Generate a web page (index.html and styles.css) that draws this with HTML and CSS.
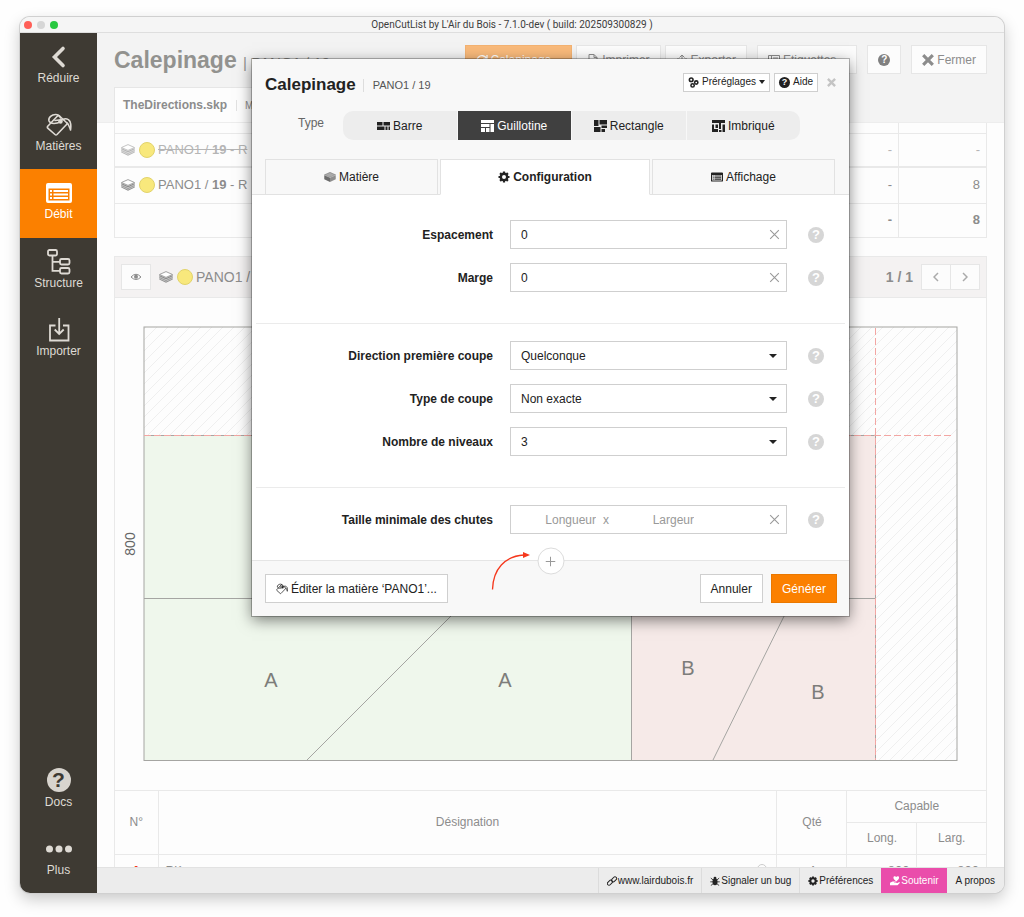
FILE: index.html
```html
<!DOCTYPE html>
<html lang="fr">
<head>
<meta charset="utf-8">
<meta name="viewport" content="width=device-width, initial-scale=1">
<title>OpenCutList by L'Air du Bois</title>
<link rel="stylesheet" href="styles.css">
</head>
<body>
<svg class="sprite" aria-hidden="true">
  <symbol id="i-back" viewBox="0 0 26 26"><path d="M17 4.500 8.500 13 17 21.500" fill="none" stroke="currentColor" stroke-width="3.600" stroke-linecap="round"/></symbol>
  <symbol id="i-bucket" viewBox="0 0 26 26"><g fill="none" stroke="currentColor" stroke-width="1.600" stroke-linejoin="round" stroke-linecap="round"><path d="M11 4.500 1.500 14.500Q1 15.500 2 16.300L9 22.500Q10 23.500 11 22.500L21.500 11.500 13.500 4Q12.500 3.200 11 4.500Z"/><path d="M14.500 9.500C11 12 4.500 12.500 3 9 2 5.500 6 2.500 9.500 2.500c3 0 4.500 2 5 3.500"/><path d="M9 8.500c3-1 6 0 8-1 2.500-1.500 5.500-.5 7 2 1 2.500 1 5.500.5 8.500-1-3-1.500-5.500-3.500-7"/></g><circle cx="14.500" cy="9.500" r="2.200" fill="currentColor"/></symbol>
  <symbol id="i-list" viewBox="0 0 26 26"><path fill="currentColor" fill-rule="evenodd" d="M2 3h22q2 0 2 2v16q0 2-2 2H2q-2 0-2-2V5Q0 3 2 3ZM2.500 8.500v12h21v-12Z"/><path fill="currentColor" d="M4 10h2v2H4zm3.500 0H22v2H7.500zM4 13.500h2v2H4zm3.500 0H22v2H7.500zM4 17h2v2H4zm3.500 0H22v2H7.500z"/></symbol>
  <symbol id="i-tree" viewBox="0 0 26 26"><g fill="none" stroke="currentColor" stroke-width="1.800"><rect x="2" y="1" width="9" height="5.500" rx="1.500"/><rect x="14" y="10" width="9.500" height="5.500" rx="1.500"/><rect x="14" y="19" width="9.500" height="5.500" rx="1.500"/><path d="M6.500 6.500v15.300H14M6.500 12.800H14"/></g></symbol>
  <symbol id="i-import" viewBox="0 0 26 26"><path fill="none" stroke="currentColor" stroke-width="1.800" d="M9.500 8.500H4V23.500H22.500V8.500H17M13.200 1v16M8.700 12.500l4.500 4.500 4.500-4.500"/></symbol>
  <symbol id="i-dots" viewBox="0 0 26 26"><g fill="currentColor"><circle cx="3.500" cy="13" r="3.500"/><circle cx="13" cy="13" r="3.500"/><circle cx="22.500" cy="13" r="3.500"/></g></symbol>
  <symbol id="i-layers" viewBox="0 0 14 12"><path fill="#fff" stroke="currentColor" stroke-width=".8" d="M7 .6 13.500 3.500 7 6.400.5 3.500Z"/><path fill="currentColor" d="M.3 4 7 7v4.700L.3 8.600ZM13.700 4 7 7v4.700l6.700-3.100Z"/><path stroke="#fff" stroke-width=".6" fill="none" opacity=".8" d="M.3 5.700 7 8.700l6.700-3M.3 7.300 7 10.300l6.700-3"/></symbol>
  <symbol id="i-solid" viewBox="0 0 14 12"><path fill="#aaa" stroke="#777" stroke-width=".6" d="M7 .6 13.500 3.500 7 6.400.5 3.500Z"/><path fill="#6c6c6c" d="M.3 4 7 7v4.700L.3 8.600Z"/><path fill="#8e8e8e" d="M13.700 4 7 7v4.700l6.700-3.100Z"/></symbol>
  <symbol id="i-eye" viewBox="0 0 12 10"><path fill="none" stroke="currentColor" d="M1 5Q6-.5 11 5 6 10 1 5Z"/><circle cx="6" cy="4.800" r="2" fill="currentColor"/></symbol>
  <symbol id="i-x" viewBox="0 0 12 12"><path fill="none" stroke="currentColor" stroke-width="3.200" d="M1.200 1.200 10.800 10.800M10.800 1.200 1.200 10.800"/></symbol>
  <symbol id="i-thin-x" viewBox="0 0 12 12"><path fill="none" stroke="currentColor" d="M2 2 10 10M10 2 2 10"/></symbol>
  <symbol id="i-gear" viewBox="0 0 12 12"><circle cx="6" cy="6" r="3.200" fill="none" stroke="currentColor" stroke-width="2.400"/><path stroke="currentColor" stroke-width="2.200" d="M6 .5v1.800M6 9.700v1.800M.5 6h1.800M9.700 6h1.800M2.100 2.100l1.300 1.300M8.600 8.600l1.300 1.300M9.900 2.100 8.600 3.400M3.400 8.600 2.100 9.900"/></symbol>
  <symbol id="i-presets" viewBox="0 0 12 12"><g fill="none" stroke="currentColor" stroke-width="1.700"><circle cx="3.500" cy="3" r="2"/><circle cx="9" cy="6" r="1.800"/><circle cx="5" cy="9.200" r="1.800"/></g></symbol>
  <symbol id="i-bar" viewBox="0 0 13 12"><path fill="currentColor" d="M0 2h5.500v3.500H0zM6.500 2H13v3.500H6.500zM0 6.500h7.500V10H0zM8.500 6.500h2V10h-2zM11.500 6.500H13V10h-1.500z"/></symbol>
  <symbol id="i-guil" viewBox="0 0 13 12"><path fill="currentColor" d="M0 0h13v3H0zM0 4h8.500v3H0zM9.500 4H13v8H9.500zM0 8h4v4H0zM5 8h3.500v4H5z"/></symbol>
  <symbol id="i-rect" viewBox="0 0 13 12"><path fill="currentColor" d="M0 0h4.500v6H0zM5.500 0H13v4.500H5.500zM0 7h6.500v5H0zM7.500 5.500H13V8H7.500zM7.500 9H11v3H7.500z"/></symbol>
  <symbol id="i-nest" viewBox="0 0 13 12"><path fill="currentColor" d="M0 0h13v3H9v6H7V3H0zM0 4.500h2V9h4v3H0zM3.500 4.500H6V8H3.500zM7 10h2.500v2H7zM10.500 4.500H13V12h-2.500z"/></symbol>
  <symbol id="i-refresh" viewBox="0 0 12 12"><path fill="none" stroke="currentColor" stroke-width="1.300" d="M10.500 4.500A5 5 0 1 0 11 7M11 1v3.800H7.200"/></symbol>
  <symbol id="i-file" viewBox="0 0 12 12"><path fill="none" stroke="currentColor" d="M2 .5h5l3 3v8H2ZM7 .5v3h3"/></symbol>
  <symbol id="i-export" viewBox="0 0 12 12"><path fill="none" stroke="currentColor" d="M3.500 5H1v6.500h10V5H8.500M6 8V1M3.500 3.500 6 1l2.500 2.500"/></symbol>
  <symbol id="i-label" viewBox="0 0 12 12"><path fill="none" stroke="currentColor" d="M.5 1.500h11v9H.5ZM3.500 1.500v9M5 4h5M5 7h5"/></symbol>
  <symbol id="i-link" viewBox="0 0 12 12"><g fill="none" stroke="currentColor" stroke-width="1.200"><rect x="5" y="2" width="7" height="4" rx="2" transform="rotate(-45 8.500 4)"/><rect x="0" y="6" width="7" height="4" rx="2" transform="rotate(-45 3.500 8)"/></g></symbol>
  <symbol id="i-bug" viewBox="0 0 12 12"><ellipse cx="6" cy="7" rx="3" ry="4.200" fill="currentColor"/><circle cx="6" cy="2.500" r="1.700" fill="currentColor"/><path stroke="currentColor" fill="none" d="M1 2.500 4 5M11 2.500 8 5M.3 7h11.400M1 11.500 4 9M11 11.500 8 9"/></symbol>
  <symbol id="i-heart" viewBox="0 0 12 12"><path fill="currentColor" d="M7.500 6.500 4.500 3.500C3-.2 6.500-.5 7.500 1.300 8.500-.5 12-.2 10.500 3.500ZM0 8l3-1.500h3.500L8 7.800H5v.6h4L11 7.300l1 .7-3 3H0Z"/></symbol>
  <pattern id="hatch" width="11" height="11" patternUnits="userSpaceOnUse"><path d="M-1 12 12-1" stroke="#efefef" stroke-width="1"/></pattern>
</svg>

<div class="window">
  <header class="titlebar">
    <span class="lights"><i class="light red"></i><i class="light gray"></i><i class="light green"></i></span>
    <span>OpenCutList by L'Air du Bois - 7.1.0-dev ( build: 202509300829 )</span>
  </header>
  <div class="app">
    <nav class="sidebar">
      <button class="nav-item"><svg class="nav-icon"><use href="#i-back"/></svg>Réduire</button>
      <button class="nav-item"><svg class="nav-icon"><use href="#i-bucket"/></svg>Matières</button>
      <button class="nav-item active"><svg class="nav-icon"><use href="#i-list"/></svg>Débit</button>
      <button class="nav-item"><svg class="nav-icon"><use href="#i-tree"/></svg>Structure</button>
      <button class="nav-item"><svg class="nav-icon"><use href="#i-import"/></svg>Importer</button>
      <span class="spacer"></span>
      <button class="nav-item"><span class="nav-icon nav-q">?</span>Docs</button>
      <button class="nav-item"><svg class="nav-icon"><use href="#i-dots"/></svg>Plus</button>
    </nav>

    <main class="main">
      <div class="topbar">
        <div class="toprow">
          <h1 class="page-title">Calepinage <small>| PANO1 / 19</small></h1>
          <div class="actions">
            <button class="btn primary-soft"><svg class="icon"><use href="#i-refresh"/></svg>Calepinage...</button>
            <button class="btn"><svg class="icon"><use href="#i-file"/></svg>Imprimer</button>
            <button class="btn"><svg class="icon"><use href="#i-export"/></svg>Exporter</button>
            <button class="btn apart"><svg class="icon"><use href="#i-label"/></svg>Etiquettes...</button>
            <button class="btn apart help-btn" aria-label="Aide"><span class="q">?</span></button>
            <button class="btn apart"><svg class="icon"><use href="#i-x"/></svg>Fermer</button>
          </div>
        </div>
        <div class="file-tab"><strong>TheDirections.skp</strong><span class="file-sub">Modèle</span></div>
      </div>

      <div class="content">
        <table class="summary">
          <tr class="cut"><td></td><td></td><td></td></tr>
          <tr class="struck"><td><span class="mat"><svg class="layers"><use href="#i-layers"/></svg><i class="dot"></i><span>PANO1 / <b>19</b> - R</span></span></td><td>-</td><td>-</td></tr>
          <tr class="thick"><td><span class="mat"><svg class="layers"><use href="#i-layers"/></svg><i class="dot"></i><span>PANO1 / <b>19</b> - R</span></span></td><td>-</td><td>8</td></tr>
          <tr class="total"><td></td><td>-</td><td>8</td></tr>
        </table>

        <section class="panel">
          <div class="panel-head">
            <button class="eye" aria-label="Afficher"><svg><use href="#i-eye"/></svg></button>
            <span class="mat"><svg class="layers"><use href="#i-layers"/></svg><i class="dot"></i><span>PANO1 / <b>19</b></span></span>
            <strong class="pages">1 / 1</strong>
            <span class="pager"><button aria-label="Précédent"><svg viewBox="0 0 6 10"><path d="M5 1 1 5l4 4"/></svg></button><button aria-label="Suivant"><svg viewBox="0 0 6 10"><path d="M1 1l4 4-4 4"/></svg></button></span>
          </div>
          <svg class="sheet" viewBox="115 298 871 492" role="img" aria-label="Plan de débit">
            <rect x="144" y="327" width="813" height="433" fill="#fdfdfd"/>
            <rect x="144" y="327" width="813" height="433" fill="url(#hatch)"/>
            <rect x="144" y="435" width="487" height="325" fill="#eff7ec"/>
            <rect x="631" y="435" width="244" height="325" fill="#f6eae8"/>
            <g stroke="#a5a5a2" fill="none"><path d="M144 435.500H875M144 598.500H875M631.500 435V760M875.500 435V760M307 760 469 598M713 760 793 598"/><rect x="144" y="327" width="813" height="433.500"/></g>
            <path d="M875.500 328V760M144 435.500H954" stroke="#f3a6a3" stroke-dasharray="7 3" fill="none"/>
            <g class="part"><text x="271" y="687">A</text><text x="505" y="687">A</text><text x="688" y="675">B</text><text x="818" y="699">B</text></g>
            <text class="dim" transform="translate(135 544) rotate(-90)">800</text>
          </svg>
          <table class="parts">
            <colgroup><col class="c-num"><col><col class="c-n"><col class="c-n"><col class="c-last"></colgroup>
            <tr><th rowspan="2">N°</th><th rowspan="2">Désignation</th><th rowspan="2">Qté</th><th colspan="2">Capable</th></tr>
            <tr><th>Long.</th><th>Larg.</th></tr>
            <tr class="part-row"><td class="num">A</td><td class="name">Pièce<i class="ring"></i></td><td>4</td><td class="r">800</td><td class="r">800</td></tr>
          </table>
        </section>
      </div>

      <footer class="statusbar">
        <a href="#"><svg class="icon"><use href="#i-link"/></svg>www.lairdubois.fr</a>
        <a href="#"><svg class="icon"><use href="#i-bug"/></svg>Signaler un bug</a>
        <a href="#"><svg class="icon"><use href="#i-gear"/></svg>Préférences</a>
        <a href="#" class="pink"><svg class="icon"><use href="#i-heart"/></svg>Soutenir</a>
        <a href="#" class="plain">A propos</a>
      </footer>

      <div class="overlay">
        <form class="modal" role="dialog" aria-labelledby="dlg">
          <div class="modal-top">
            <div class="modal-head">
              <h2 id="dlg">Calepinage</h2><span class="sub">PANO1 / 19</span>
              <span class="spacer"></span>
              <button type="button" class="btn small"><svg class="icon"><use href="#i-presets"/></svg>Préréglages<i class="caret"></i></button>
              <button type="button" class="btn small"><span class="q">?</span>Aide</button>
              <button type="button" class="close" aria-label="Fermer"><svg><use href="#i-x"/></svg></button>
            </div>
            <div class="types">
              <span class="type-label">Type</span>
              <div class="segments">
                <button type="button"><svg class="icon"><use href="#i-bar"/></svg>Barre</button>
                <button type="button" class="on"><svg class="icon"><use href="#i-guil"/></svg>Guillotine</button>
                <button type="button"><svg class="icon"><use href="#i-rect"/></svg>Rectangle</button>
                <button type="button"><svg class="icon"><use href="#i-nest"/></svg>Imbriqué</button>
              </div>
            </div>
            <div class="tabs">
              <button type="button" class="tab"><svg class="icon"><use href="#i-solid"/></svg>Matière</button>
              <button type="button" class="tab current"><svg class="icon"><use href="#i-gear"/></svg>Configuration</button>
              <button type="button" class="tab"><svg class="icon"><use href="#i-list"/></svg>Affichage</button>
            </div>
          </div>
          <div class="modal-body">
            <div class="group">
              <div class="row"><label for="f1">Espacement</label><div class="field"><input id="f1" type="text" value="0"><button type="button" class="clear" aria-label="Effacer"><svg><use href="#i-thin-x"/></svg></button></div><span class="q">?</span></div>
              <div class="row"><label for="f2">Marge</label><div class="field"><input id="f2" type="text" value="0"><button type="button" class="clear" aria-label="Effacer"><svg><use href="#i-thin-x"/></svg></button></div><span class="q">?</span></div>
            </div>
            <div class="group">
              <div class="row"><label for="f3">Direction première coupe</label><div class="field select"><select id="f3"><option>Quelconque</option></select></div><span class="q">?</span></div>
              <div class="row"><label for="f4">Type de coupe</label><div class="field select"><select id="f4"><option>Non exacte</option></select></div><span class="q">?</span></div>
              <div class="row"><label for="f5">Nombre de niveaux</label><div class="field select"><select id="f5"><option>3</option></select></div><span class="q">?</span></div>
            </div>
            <div class="group last">
              <div class="row"><label for="f6">Taille minimale des chutes</label><div class="field size"><input id="f6" type="text" placeholder="Longueur"><span>x</span><input type="text" placeholder="Largeur" aria-label="Largeur"><button type="button" class="clear" aria-label="Effacer"><svg><use href="#i-thin-x"/></svg></button></div><span class="q">?</span></div>
            </div>
          </div>
          <div class="modal-foot">
            <button type="button" class="btn"><svg class="icon"><use href="#i-bucket"/></svg>Éditer la matière ‘PANO1’...</button>
            <span class="spacer"></span>
            <button type="button" class="btn">Annuler</button>
            <button type="submit" class="btn primary">Générer</button>
            <button type="button" class="plus" aria-label="Plus d'options"><svg viewBox="0 0 10 10"><path d="M5 0v10M0 5h10"/></svg></button>
            <svg class="arrow" viewBox="0 0 40 40" aria-hidden="true"><path d="M1.500 38.500C2 18 14 5 33 4" fill="none" stroke="#f5381d" stroke-width="1.300"/><path d="M32 1l7 3-7 3Z" fill="#f5381d"/></svg>
          </div>
        </form>
      </div>
    </main>
  </div>
</div>
</body>
</html>
```
FILE: styles.css
```css
*, *::before, *::after { box-sizing: border-box; }
body { margin: 0; height: 100vh; padding: 17px 20px 24px; background: #fefefe; font: 12px/16px "Liberation Sans", Arial, sans-serif; color: #222; overflow: hidden; }
button, input, select { font: inherit; color: inherit; margin: 0; border-radius: 0; }
button { cursor: pointer; white-space: nowrap; }
.sprite { position: absolute; width: 0; height: 0; }
.spacer { flex: 1; }

.window { height: 100%; display: flex; flex-direction: column; border-radius: 10px; overflow: hidden; box-shadow: 0 0 0 1px #d0d0d0, 0 6px 16px rgba(0,0,0,.22); background: #fdfdfd; }
.titlebar { position: relative; display: flex; justify-content: center; height: 16px; border-bottom: 1px solid #dedede; background: #f5f5f5; font: 10px/15px Roboto, "Liberation Sans", sans-serif; color: #3c3c3c; flex: none; }
.lights { position: absolute; left: 4px; top: 4px; display: flex; gap: 5px; }
.light { width: 8px; height: 8px; border-radius: 50%; }
.red { background: #ff5f57; }
.gray { background: #d6d6d6; }
.green { background: #28c840; }
.app { flex: 1; display: flex; min-height: 0; }

.sidebar { width: 77px; flex: none; display: flex; flex-direction: column; background: #3e3a33; }
.nav-item { display: flex; flex-direction: column; align-items: center; height: 68px; padding: 11px 0 0; border: 0; background: none; color: #dedad4; line-height: 16px; }
.nav-item.active { height: 69px; background: #fb8000; color: #fff; }
.nav-icon { width: 26px; height: 26px; }
.nav-q { width: 24px; height: 24px; margin-bottom: 2px; border-radius: 50%; background: #d8d4ce; color: #3e3a33; font-weight: bold; font-size: 21px; line-height: 24px; text-align: center; }

.main { position: relative; flex: 1; min-width: 0; display: flex; flex-direction: column; color: #8c8c8c; }
.topbar { flex: none; display: flex; flex-direction: column; padding: 12px 17px 0; height: 90px; background: #f3f3f3; border-bottom: 1px solid #ededed; }
.toprow { display: flex; justify-content: space-between; height: 43px; }
.page-title { margin: 0; font-size: 23px; line-height: 30px; color: #92928f; white-space: nowrap; }
.page-title small { font-size: 15px; font-weight: normal; }
.actions { display: flex; gap: 4px; }
.btn { display: inline-flex; align-items: center; gap: 3px; height: 29px; padding: 0 10px; border: 1px solid #cfcfcf; background: #fff; }
.topbar .btn { border-color: #e6e6e6; background: #fcfcfc; }
.topbar .btn.apart { margin-left: 6px; }
.topbar .btn.primary-soft { background: #f9ba7b; border-color: #f3b272; color: #fff; }
.icon { width: 12px; height: 12px; flex: none; }
.q { display: inline-block; flex: none; width: 16px; height: 16px; border-radius: 50%; background: #d6d6d6; color: #fff; font-weight: bold; font-size: 13px; line-height: 16px; text-align: center; }
.btn .q { width: 12px; height: 12px; font-size: 10px; line-height: 12px; background: #808080; }
.file-tab { align-self: flex-start; width: 400px; height: 35px; flex: none; padding: 9px 8px; background: #fdfdfd; border: 1px solid #e6e6e6; border-bottom: 0; }
.file-sub { margin-left: 9px; padding-left: 8px; border-left: 1px solid #e2e2e2; font-size: 10px; }

.content { flex: 1; min-height: 0; overflow: hidden; padding: 0 17px; }
table { border-collapse: collapse; width: 100%; table-layout: fixed; font-size: 13px; }
td, th { border: 1px solid #e9e9e9; font-weight: normal; }
.summary td { height: 34px; padding: 0 6px; text-align: right; }
.summary td:nth-child(n+2) { width: 88px; }
.summary .cut td { height: 10px; border-top: 0; }
.summary .thick td { height: 36px; border-top-width: 2px; }
.struck { color: #b5b5b5; }
.struck .mat { text-decoration: line-through; }
.summary .total td { font-weight: bold; }
.mat { display: flex; align-items: center; gap: 3px; text-align: left; }
.layers { width: 14px; height: 12px; margin-right: 1px; }
.dot { width: 16px; height: 16px; border-radius: 50%; background: #f8e87c; border: 1px solid #e2d36b; }

.panel { margin-top: 18px; border: 1px solid #e9e9e9; }
.panel-head { display: flex; align-items: center; height: 41px; padding: 0 6px; background: #f4f2f2; border-bottom: 1px solid #e9e9e9; font-size: 14px; }
.eye, .pager button { display: flex; align-items: center; justify-content: center; width: 30px; height: 26px; padding: 0; border: 1px solid #e6e6e6; background: #fcfcfc; }
.eye svg { width: 12px; height: 10px; }
.panel-head .mat { margin-left: 8px; }
.pages { margin-left: auto; margin-right: 8px; }
.pager { display: flex; }
.pager button + button { margin-left: -1px; }
.pager svg { width: 6px; height: 10px; fill: none; stroke: #aaa; stroke-width: 1.5; }
.sheet { display: block; width: 100%; height: auto; }
.part { font-size: 20px; fill: #7d7d7a; text-anchor: middle; }
.dim { font-size: 14px; fill: #666; text-anchor: middle; }
.parts { font-size: 12px; text-align: center; }
.parts th { height: 32px; padding: 0; }
.parts tr > :first-child { border-left: 0; }
.parts tr > :last-child { border-right: 0; }
.parts tr:nth-child(2) > :first-child { border-left: 1px solid #e9e9e9; }
.c-num { width: 43px; }
.c-n { width: 70px; }
.c-last { width: 69px; }
.parts td { height: 34px; padding: 0 7px; font-size: 13px; }
.parts .num { color: #f5381d; font-weight: bold; }
.parts .name { text-align: left; }
.parts .r { text-align: right; }
.ring { float: right; width: 10px; height: 10px; margin: 1px 2px; border: 1px solid #ccc; border-radius: 50%; }

.statusbar { flex: none; display: flex; justify-content: flex-end; height: 26px; border-top: 1px solid #e2e2e2; background: #ececec; font-size: 10px; }
.statusbar a { display: flex; align-items: center; padding: 0 8px; border-left: 1px solid #dcdcdc; color: #222; text-decoration: none; white-space: nowrap; }
.statusbar .icon { width: 10px; height: 10px; margin-right: 1px; }
.statusbar .pink { background: #ea4dab; border-color: #ea4dab; color: #fff; }
.statusbar .plain { padding: 0 9px; border: 0; }

.overlay { position: absolute; inset: 0; display: flex; align-items: flex-start; justify-content: center; padding-top: 26px; }
.modal { width: 597px; max-width: 100%; background: #fff; color: #222; box-shadow: 0 0 0 1px rgba(0,0,0,.25), 0 4px 14px rgba(0,0,0,.5); }
.modal-top { background: #f8f8f8; }
.modal-head { display: flex; align-items: center; height: 52px; padding: 0 13px; gap: 4px; }
.modal-head h2 { margin: 0; font-size: 17px; line-height: 24px; }
.sub { margin-left: 3px; padding-left: 9px; border-left: 1px solid #ddd; color: #555; font-size: 11px; line-height: 13px; }
.modal-head .btn { margin-bottom: 6px; }
.btn.small { height: 19px; padding: 0 4px; font-size: 10px; }
.btn.small .icon { width: 11px; height: 11px; }
.btn.small .q { width: 11px; height: 11px; font-size: 9px; line-height: 11px; background: #222; }
.caret { border: 3px solid transparent; border-top: 4px solid currentColor; border-bottom: 0; }
.close { display: flex; margin: 0 0 6px 5px; padding: 0; border: 0; background: none; color: #c4c4c4; }
.close svg { width: 9px; height: 9px; }
.types { display: flex; padding: 0 49px 19px 46px; }
.type-label { width: 45px; line-height: 25px; color: #666; }
.segments { flex: 1; display: grid; grid-template-columns: repeat(4, 1fr); gap: 1px; border-radius: 10px; overflow: hidden; }
.segments button { display: flex; align-items: center; justify-content: center; gap: 3px; height: 29px; padding: 0; border: 0; background: #ededed; }
.segments .icon { width: 13px; }
.segments .on { background: #404040; color: #fff; }
.tabs { display: grid; grid-template-columns: 173px 210px 183px; gap: 2px; padding: 0 13px; box-shadow: inset 0 -1px #e2e2e2; }
.tab { display: flex; align-items: center; justify-content: center; gap: 3px; height: 36px; padding: 0; border: 1px solid #e2e2e2; background: #f8f8f8; }
.tab.current { background: #fff; border-bottom-color: #fff; font-weight: bold; }

.group { display: flex; flex-direction: column; gap: 14px; margin: 0 4px; padding: 17px 9px 31px; border-bottom: 1px solid #ebebeb; }
.group:first-child { padding-top: 25px; }
.group.last { padding-bottom: 26px; border: 0; }
.row { display: grid; grid-template-columns: 228px 277px 1fr; column-gap: 17px; align-items: center; }
.row label { font-weight: bold; text-align: right; }
.row > .q { margin-left: 4px; }
.field { position: relative; display: flex; }
.field input, .field select { width: 100%; height: 29px; padding: 0 10px; border: 1px solid #cfcfcf; background: #fff; outline: 0; appearance: none; }
.clear { position: absolute; right: 6px; top: 8px; padding: 0; border: 0; background: none; color: #999; }
.clear svg { display: block; width: 13px; height: 13px; }
.select::after { content: ""; position: absolute; right: 10px; top: 13px; border: 4px solid transparent; border-top-color: #222; border-bottom: 0; pointer-events: none; }
.field.size { align-items: center; height: 29px; border: 1px solid #cfcfcf; color: #999; }
.size .clear { right: 5px; top: 7px; }
.field.size input { width: 80px; height: 27px; padding: 0; border: 0; margin-left: 5px; text-align: right; background: none; }
.size input + span { margin-left: 7px; }
.size input::placeholder { color: #999; }
.modal-foot { position: relative; display: flex; align-items: center; gap: 8px; height: 56px; padding: 0 12px 0 13px; border-top: 1px solid #e5e5e5; background: #f8f8f8; }
.modal-foot .btn.primary { background: #fb8000; border-color: #ea7800; color: #fff; }
.plus { position: absolute; left: 50%; top: 0; width: 27px; height: 27px; transform: translate(-50%, -50%); display: flex; align-items: center; justify-content: center; padding: 0; border: 1px solid #dcdcdc; border-radius: 50%; background: #fff; }
.plus svg { width: 10px; height: 10px; stroke: #999; }
.arrow { position: absolute; left: 239px; top: -10px; width: 40px; height: 40px; }
```
